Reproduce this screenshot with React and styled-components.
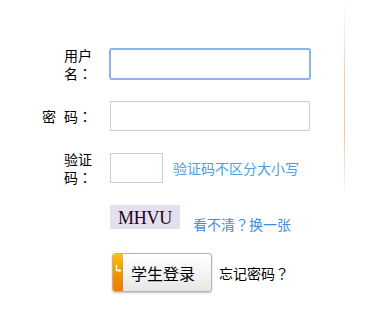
import React from 'react'
import styled, { createGlobalStyle } from 'styled-components'

const GlobalStyle = createGlobalStyle`
  html, body { margin: 0; padding: 0; background: #fff; }
  body {
    font-family: "Noto Sans CJK SC", "Liberation Sans", sans-serif;
    font-size: 14px;
    color: #000;
  }
`

const Page = styled.div`
  display: flex;
  align-items: flex-start;
  width: 382px;
  height: 332px;
`

const Form = styled.div`
  width: 344px;
  padding-top: 49px;
  display: flex;
  flex-direction: column;
  gap: 22px;
`

const Divider = styled.div`
  width: 1px;
  height: 192px;
  background: linear-gradient(to bottom, rgba(255, 190, 150, 0) 0%, #ffc6a6 40%, #ffc2a0 70%, rgba(255, 200, 170, 0.2) 100%);
`

const Row = styled.div`
  display: flex;
  align-items: ${p => p.$align || 'center'};
  height: ${p => p.$h || 30}px;
  margin-top: ${p => p.$mt || 0}px;
`

const Label = styled.div`
  width: 92px;
  margin-right: 18px;
  flex-shrink: 0;
  text-align: right;
  line-height: 18px;
  white-space: nowrap;
`

/* full-width punctuation centred in its cell, as in the screenshot */
const P = styled.span`
  font-family: "Noto Sans CJK TC", "Noto Sans CJK SC", sans-serif;
`

const Gap = styled.span`
  display: inline-block;
  width: ${p => p.$w}px;
`

const Input = styled.input`
  box-sizing: border-box;
  width: ${p => p.$w || 200}px;
  height: 30px;
  margin: 0;
  padding: 0 4px;
  border: 1px solid ${p => (p.$focus ? '#8db3ef' : '#cccccc')};
  border-radius: ${p => (p.$focus ? 2 : 0)}px;
  box-shadow: ${p => (p.$focus ? '0 0 0 1px #8db3ef' : 'none')};
  outline: none;
  background: #fff;
  font-size: 14px;
`

const Hint = styled.span`
  margin-left: 10px;
  color: #4c9fe0;
  line-height: 16px;
`

const Captcha = styled.div`
  margin-left: 110px;
  width: 70px;
  height: 24px;
  background: #e5e0f0;
  color: #1e021e;
  font-family: "Liberation Serif", serif;
  font-size: 18px;
  line-height: 26px;
  text-align: center;
  letter-spacing: -0.3px;
`

const Link = styled.a`
  margin-left: 13px;
  margin-bottom: -3px;
  color: #3d8ee2;
  line-height: 16px;
  text-decoration: none;
  cursor: pointer;
`

const LoginButton = styled.button`
  margin-left: 112px;
  display: flex;
  align-items: stretch;
  width: 100px;
  height: 39px;
  padding: 0;
  border: 1px solid #b4b4b4;
  border-radius: 3px;
  background: linear-gradient(to bottom, #ffffff 0%, #f4f4f4 50%, #e6e6e6 100%);
  box-shadow: 0 1px 2px rgba(0, 0, 0, 0.25);
  overflow: hidden;
  cursor: pointer;
  font-family: inherit;
`

const Strip = styled.span`
  width: 10px;
  flex-shrink: 0;
  background: linear-gradient(to bottom, #ffbf1a 0%, #f5a000 35%, #ea7c00 100%);
  display: flex;
  justify-content: center;
  padding-top: 11px;
  box-sizing: border-box;
`

const ButtonText = styled.span`
  flex: 1;
  display: flex;
  align-items: center;
  justify-content: center;
  padding-right: 8px;
  font-size: 16px;
  color: #000;
`

const Forgot = styled.span`
  margin-left: 7px;
  line-height: 18px;
`

function Arrow() {
  return (
    <svg width="7" height="8" viewBox="0 0 7 8">
      <path d="M1.5 0 V5.5 H5" stroke="#fff" strokeWidth="1.5" fill="none" />
      <path d="M4 3.5 L6.5 5.5 L4 7.5 Z" fill="#fff" />
    </svg>
  )
}

export default function App() {
  return (
    <Page>
      <GlobalStyle />
      <Form>
        <Row>
          <Label>用户<br />名<P>：</P></Label>
          <Input $focus type="text" />
        </Row>
        <Row>
          <Label>密<Gap $w={8} />码<P>：</P></Label>
          <Input type="password" />
        </Row>
        <Row>
          <Label>验证<br />码<P>：</P></Label>
          <Input $w={53} type="text" />
          <Hint>验证码不区分大小写</Hint>
        </Row>
        <Row $h={24} $align="flex-end">
          <Captcha>MHVU</Captcha>
          <Link>看不清<P>？</P>换一张</Link>
        </Row>
        <Row $h={39} $mt={2}>
          <LoginButton>
            <Strip><Arrow /></Strip>
            <ButtonText>学生登录</ButtonText>
          </LoginButton>
          <Forgot>忘记密码<P>？</P></Forgot>
        </Row>
      </Form>
      <Divider />
    </Page>
  )
}
